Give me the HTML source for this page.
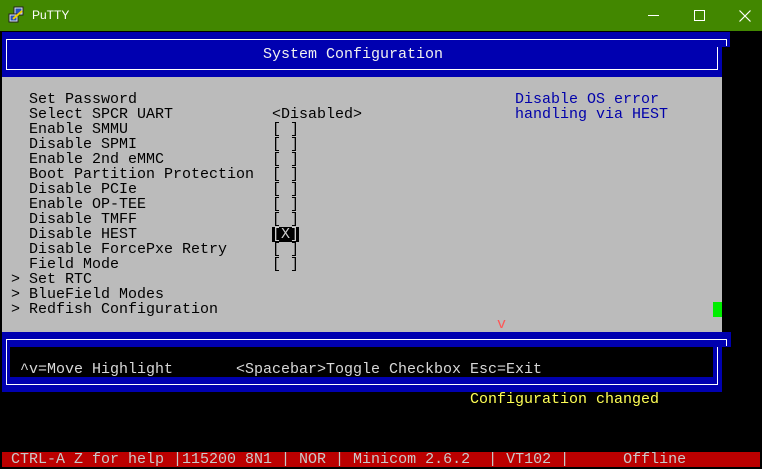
<!DOCTYPE html>
<html><head><meta charset="utf-8"><style>
*{margin:0;padding:0;box-sizing:border-box}
body{width:762px;height:469px;background:#000;position:relative;overflow:hidden;font-family:"Liberation Mono",monospace;font-size:15px;line-height:15px}
.a{position:absolute}
.t{position:absolute;white-space:pre;height:15px;line-height:15px}
</style></head><body>
<!-- title bar -->
<div class="a" style="left:0;top:0;width:762px;height:31px;background:#428700"></div>
<svg class="a" style="left:8px;top:6px" width="18" height="18" viewBox="0 0 18 18">
<rect x="6" y="1" width="9" height="8" fill="#dfe8f0" stroke="#222"/>
<rect x="7.5" y="2.5" width="6" height="5" fill="#2a4fb8"/>
<rect x="1" y="8" width="9" height="8" fill="#dfe8f0" stroke="#222"/>
<rect x="2.5" y="9.5" width="6" height="5" fill="#2a4fb8"/>
<path d="M5 13 L14 5" stroke="#f0d000" stroke-width="2"/>
</svg>
<div class="a" style="left:32px;top:7px;font-family:'Liberation Sans',sans-serif;font-size:12px;line-height:16px;color:#fff">PuTTY</div>
<div class="a" style="left:648px;top:15px;width:11px;height:1px;background:#fff"></div>
<div class="a" style="left:694px;top:10px;width:11px;height:11px;border:1px solid #fff"></div>
<svg class="a" style="left:739px;top:10px" width="12" height="12"><path d="M0.5 0.5L11.5 11.5M11.5 0.5L0.5 11.5" stroke="#fff" stroke-width="1.2"/></svg>

<!-- top blue box -->
<div class="a" style="left:2px;top:32px;width:728px;height:15px;background:#0000b0"></div>
<div class="a" style="left:2px;top:47px;width:720px;height:30px;background:#0000b0"></div>
<div class="a" style="left:6px;top:39px;width:721px;height:1px;background:#fff"></div>
<div class="a" style="left:726px;top:39px;width:1px;height:7px;background:#fff"></div>
<div class="a" style="left:6px;top:39px;width:1px;height:31px;background:#fff"></div>
<div class="a" style="left:717px;top:47px;width:1px;height:23px;background:#fff"></div>
<div class="a" style="left:6px;top:69px;width:712px;height:1px;background:#fff"></div>
<div class="t" style="left:263px;top:47px;color:#f0f0f0">System Configuration</div>

<!-- gray area -->
<div class="a" style="left:2px;top:77px;width:720px;height:255px;background:#bbbbbb"></div>
<div class="t" style="left:29px;top:92px;color:#000">Set Password
Select SPCR UART
Enable SMMU
Disable SPMI
Enable 2nd eMMC
Boot Partition Protection
Disable PCIe
Enable OP-TEE
Disable TMFF
Disable HEST
Disable ForcePxe Retry
Field Mode</div>
<div class="t" style="left:11px;top:272px;color:#000">&gt; Set RTC
&gt; BlueField Modes
&gt; Redfish Configuration</div>
<div class="t" style="left:272px;top:107px;color:#000">&lt;Disabled&gt;
[ ]
[ ]
[ ]
[ ]
[ ]
[ ]
[ ]

[ ]
[ ]</div>
<div class="a" style="left:272px;top:227px;width:27px;height:15px;background:#000"></div>
<div class="t" style="left:272px;top:227px;color:#ccc">[X]</div>
<div class="t" style="left:515px;top:92px;color:#0000aa">Disable OS error
handling via HEST</div>
<div class="t" style="left:497px;top:317px;color:#ff5555">v</div>
<div class="a" style="left:713px;top:302px;width:9px;height:15px;background:#00ee00"></div>

<!-- bottom blue box -->
<div class="a" style="left:2px;top:332px;width:729px;height:15px;background:#0000b0"></div>
<div class="a" style="left:2px;top:347px;width:720px;height:45px;background:#0000b0"></div>
<div class="a" style="left:6px;top:339px;width:721px;height:1px;background:#fff"></div>
<div class="a" style="left:726px;top:339px;width:1px;height:7px;background:#fff"></div>
<div class="a" style="left:6px;top:339px;width:1px;height:46px;background:#fff"></div>
<div class="a" style="left:717px;top:347px;width:1px;height:38px;background:#fff"></div>
<div class="a" style="left:6px;top:384px;width:712px;height:1px;background:#fff"></div>
<div class="a" style="left:10px;top:347px;width:703px;height:30px;background:#000"></div>
<div class="t" style="left:20px;top:362px;color:#d8d8d8">^v=Move Highlight</div>
<div class="t" style="left:236px;top:362px;color:#d8d8d8">&lt;Spacebar&gt;Toggle Checkbox Esc=Exit</div>

<div class="t" style="left:470px;top:392px;color:#ffff55">Configuration changed</div>

<!-- status bar -->
<div class="a" style="left:2px;top:452px;width:758px;height:15px;background:#bb0000"></div>
<div class="t" style="left:2px;top:452px;color:#c8c8c8"> CTRL-A Z for help |115200 8N1 | NOR | Minicom 2.6.2  | VT102 |      Offline</div>
</body></html>
